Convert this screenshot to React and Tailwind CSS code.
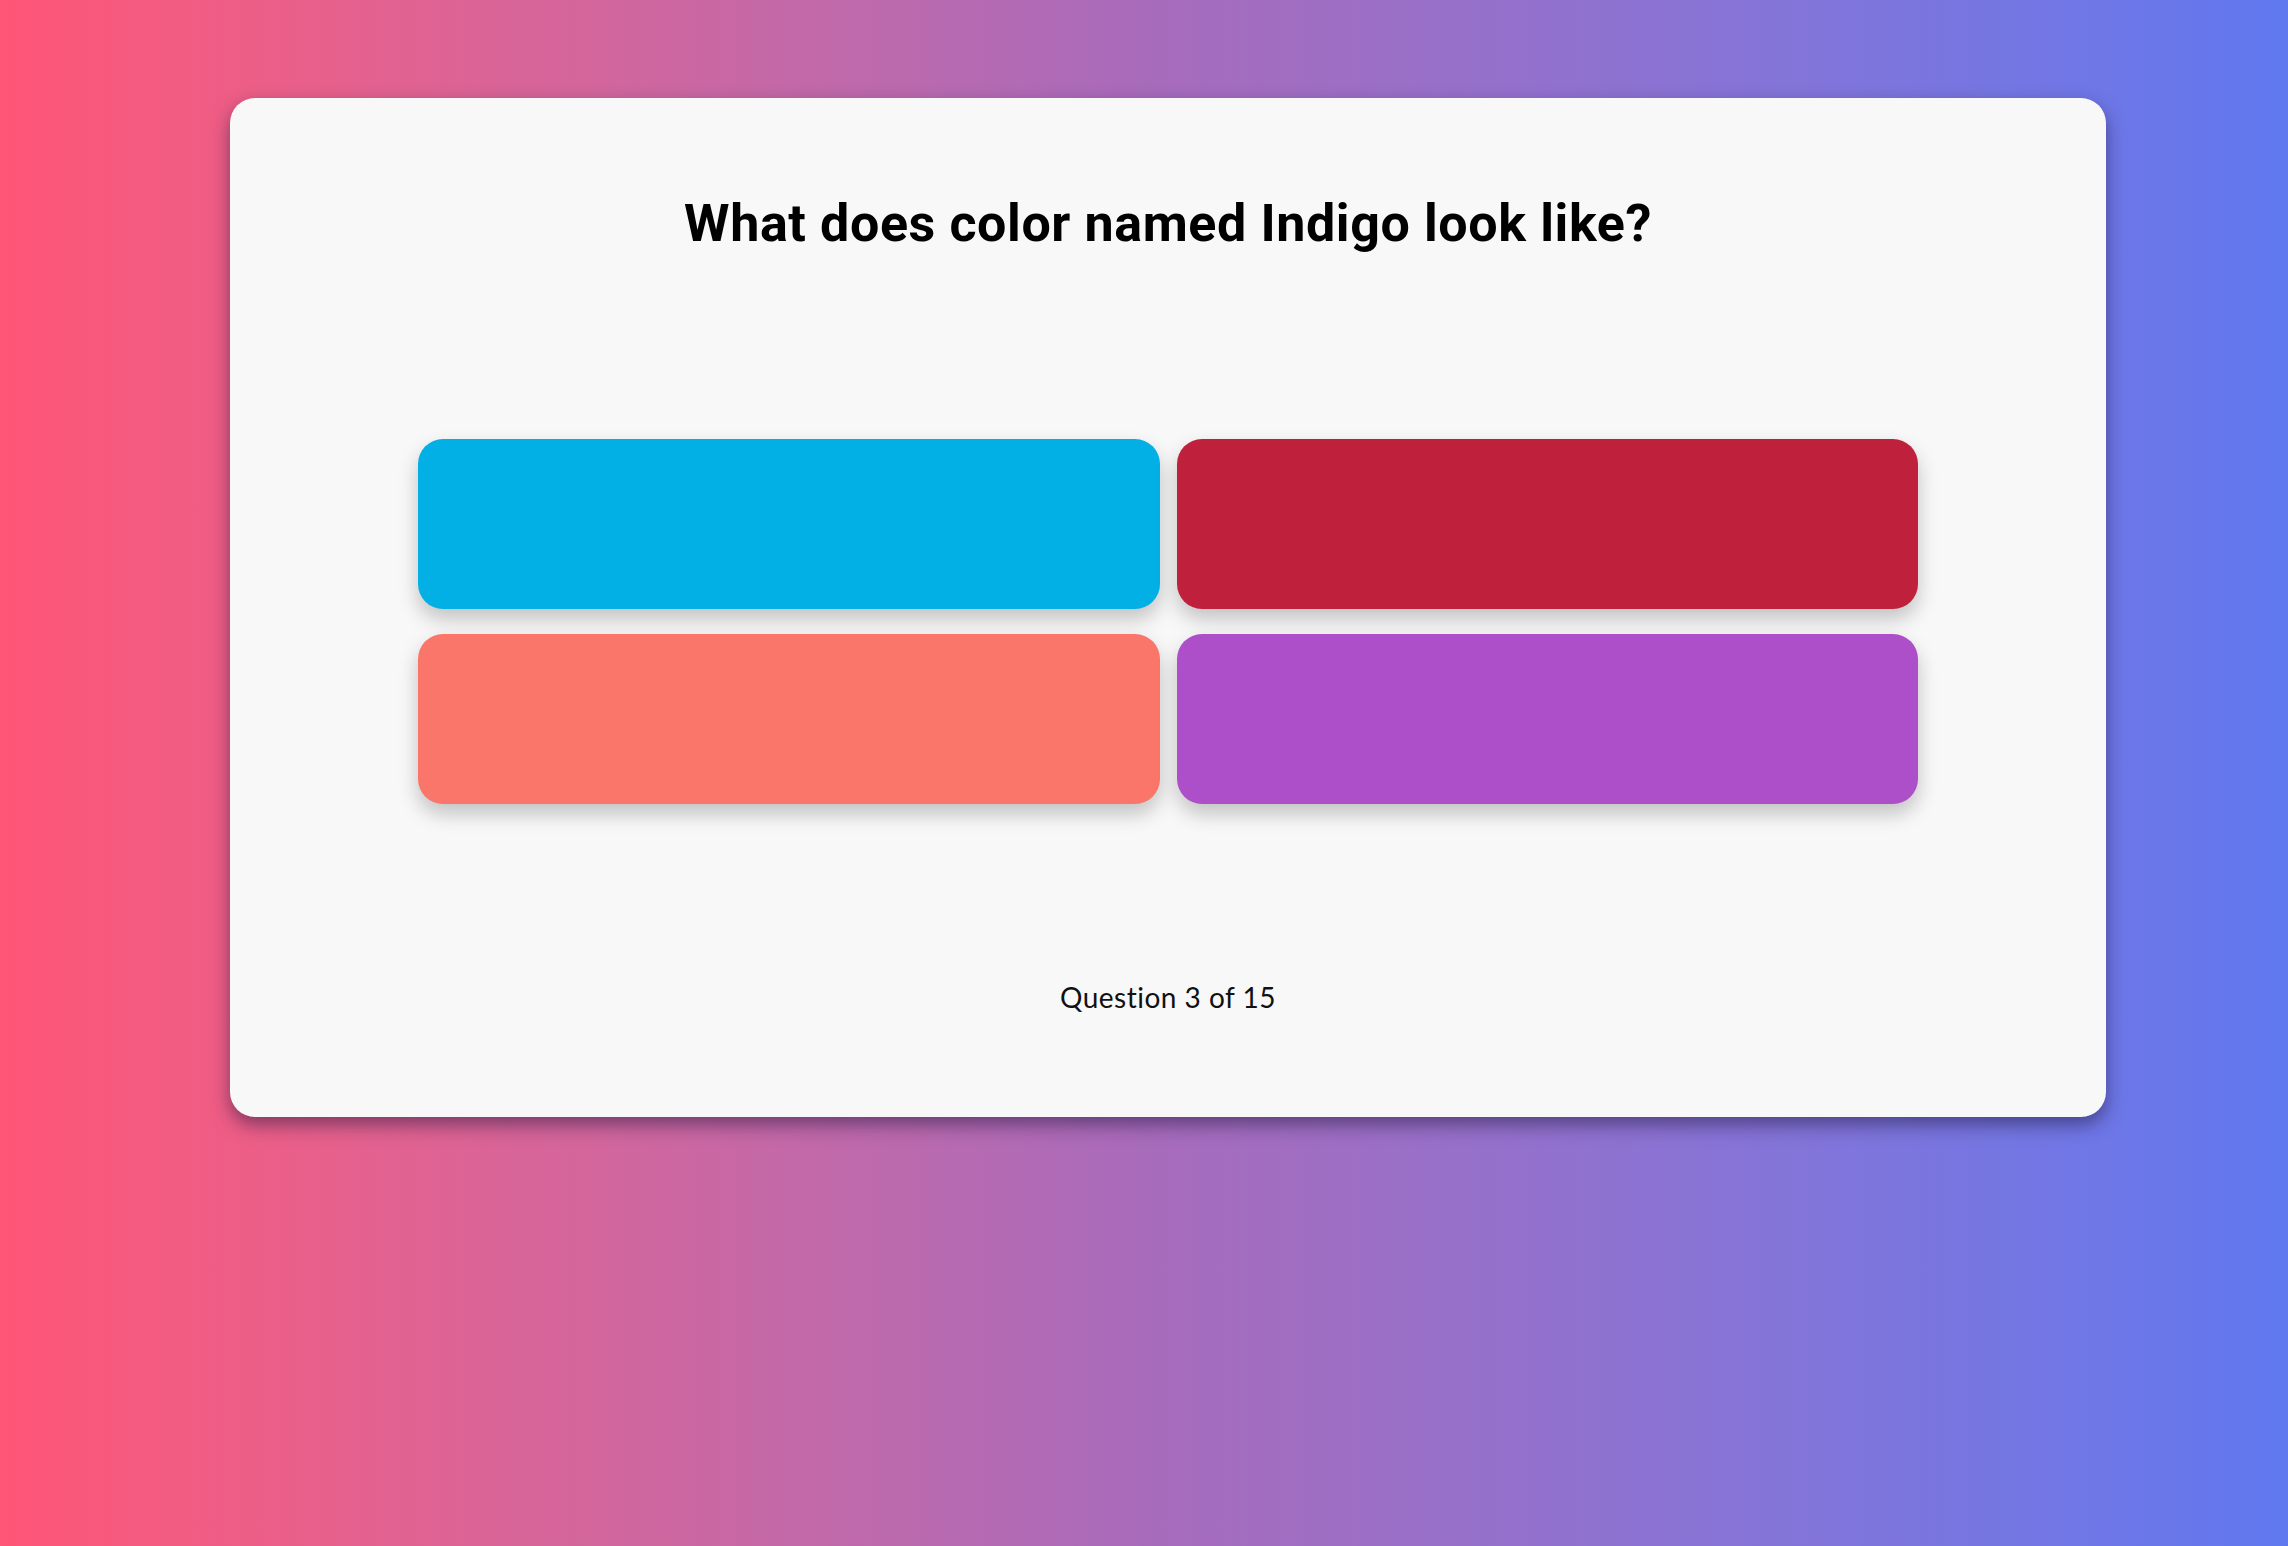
const options = [
  { id: 1, color: "bg-[#02b0e5]" },
  { id: 2, color: "bg-[#bf203b]" },
  { id: 3, color: "bg-[#fa756a]" },
  { id: 4, color: "bg-[#ad4fc8]" },
];

export default function App() {
  return (
    <div className="min-h-[1546px] w-full bg-gradient-to-r from-[#ff5576] via-[#a86bbb] to-[#6078ef] pt-[98px]">
      <div className="ml-[230px] w-[1876px] h-[1019px] rounded-[25px] bg-[#f8f8f8] shadow-[0_8px_18px_rgba(30,20,60,0.5)] flex flex-col items-center">
        <h1 className="mt-[96px] text-[52px] leading-[60px] font-bold text-black font-['Roboto','Liberation_Sans',sans-serif] tracking-[0.6px]">
          What does color named Indigo look like?
        </h1>
        <div className="mt-[185px] grid grid-cols-2 gap-x-[17px] gap-y-[25px] w-[1500px]">
          {options.map((o) => (
            <button
              key={o.id}
              className={`h-[170px] rounded-[25px] ${o.color} shadow-[0_10px_20px_rgba(0,0,0,0.22)]`}
            />
          ))}
        </div>
        <p className="mt-[177px] text-[28px] leading-[32px] text-[#111] font-['Lato','Liberation_Sans',sans-serif] tracking-[0.5px] [font-variant-ligatures:none]">
          Question 3 of 15
        </p>
      </div>
    </div>
  );
}
